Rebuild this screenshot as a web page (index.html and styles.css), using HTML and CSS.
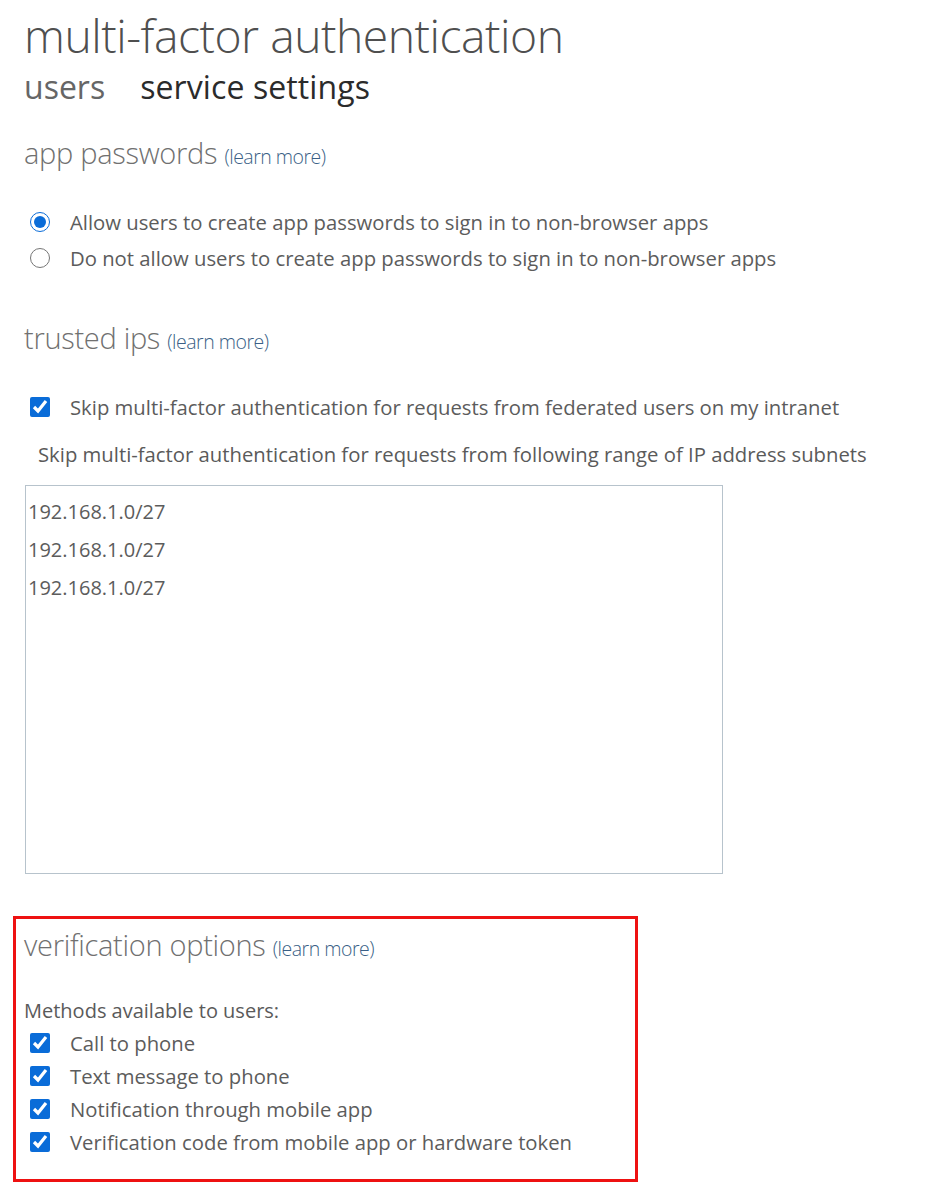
FILE: index.html
```html
<!DOCTYPE html>
<html lang="en">

<head>
    <meta charset="UTF-8">
    <title>multi-factor authentication</title>
    <link rel="stylesheet" href="styles.css">
</head>

<body>
    <div class="page">
        <h1 class="page-title">multi-factor authentication</h1>
        <nav class="tabs">
            <a class="tab">users</a>
            <a class="tab active">service settings</a>
        </nav>

        <section class="section">
            <h2 class="section-title">app passwords <a class="learn-more">(learn more)</a></h2>
            <div class="options">
                <label class="option radio-row">
                    <input type="radio" name="apppw" checked>
                    <span>Allow users to create app passwords to sign in to non-browser apps</span>
                </label>
                <label class="option radio-row">
                    <input type="radio" name="apppw">
                    <span>Do not allow users to create app passwords to sign in to non-browser apps</span>
                </label>
            </div>
        </section>

        <section class="section trusted">
            <h2 class="section-title">trusted ips <a class="learn-more">(learn more)</a></h2>
            <label class="option check-row">
                <input type="checkbox" checked>
                <span>Skip multi-factor authentication for requests from federated users on my intranet</span>
            </label>
            <p class="field-label">Skip multi-factor authentication for requests from following range of IP address subnets</p>
            <textarea class="ip-list">192.168.1.0/27
192.168.1.0/27
192.168.1.0/27</textarea>
        </section>

        <section class="section highlight">
            <h2 class="section-title">verification options <a class="learn-more">(learn more)</a></h2>
            <p class="methods-label">Methods available to users:</p>
            <div class="methods">
                <label class="option method-row"><input type="checkbox" checked><span>Call to phone</span></label>
                <label class="option method-row"><input type="checkbox" checked><span>Text message to phone</span></label>
                <label class="option method-row"><input type="checkbox" checked><span>Notification through mobile app</span></label>
                <label class="option method-row"><input type="checkbox" checked><span>Verification code from mobile app or hardware token</span></label>
            </div>
        </section>
    </div>
</body>

</html>
```

FILE: styles.css
```css
* {
    margin: 0;
    padding: 0;
    box-sizing: border-box;
}

body {
    font-family: 'Open Sans', 'Noto Sans', sans-serif;
    color: #5a5a5a;
    background: #ffffff;
}

.page {
    padding: 8px 0 0 24px;
}

.page-title {
    font-size: 46.3px;
    font-weight: 300;
    color: #4f4f4f;
    line-height: 56px;
    letter-spacing: -0.5px;
}

.tabs {
    display: flex;
    gap: 35px;
    margin-top: 3px;
}

.tab {
    font-size: 32px;
    font-weight: 400;
    color: #666666;
    line-height: 40px;
}

.tab.active {
    color: #2b2b2b;
    letter-spacing: 0.1px;
}

.section {
    margin-top: 26px;
}

.section.trusted {
    margin-top: 42px;
}

.section-title {
    font-size: 29px;
    font-weight: 300;
    color: #707070;
    line-height: 40px;
    letter-spacing: -0.3px;
}

.learn-more {
    font-size: 19.5px;
    color: #3a5f86;
    letter-spacing: -0.5px;
}

.options {
    margin-top: 27px;
}

.option {
    display: flex;
    align-items: center;
    font-size: 20.3px;
    color: #5c5c5c;
}

.option input {
    width: 20px;
    height: 20px;
    margin: 0 20px 0 6px;
    accent-color: #0a6cd8;
}

.radio-row {
    height: 36px;
}

.check-row {
    margin-top: 27px;
    height: 36px;
}

.field-label {
    font-size: 20.3px;
    line-height: 28px;
    margin: 15px 0 0 14px;
}

.ip-list {
    display: block;
    width: 698px;
    height: 389px;
    margin: 17px 0 0 1px;
    padding: 7px 2px;
    border: 1px solid #b7c3cc;
    font-family: inherit;
    font-size: 20px;
    line-height: 38px;
    color: #5c5c5c;
    resize: none;
    outline: none;
}

.highlight {
    margin: 42px 0 0 -11px;
    width: 625px;
    height: 266px;
    padding: 6px 0 0 8px;
    border: 3px solid #ee1111;
}

.methods-label {
    font-size: 20px;
    line-height: 28px;
    margin-top: 28px;
}

.methods {
    margin-top: 1px;
}

.method-row {
    height: 33px;
}
```
